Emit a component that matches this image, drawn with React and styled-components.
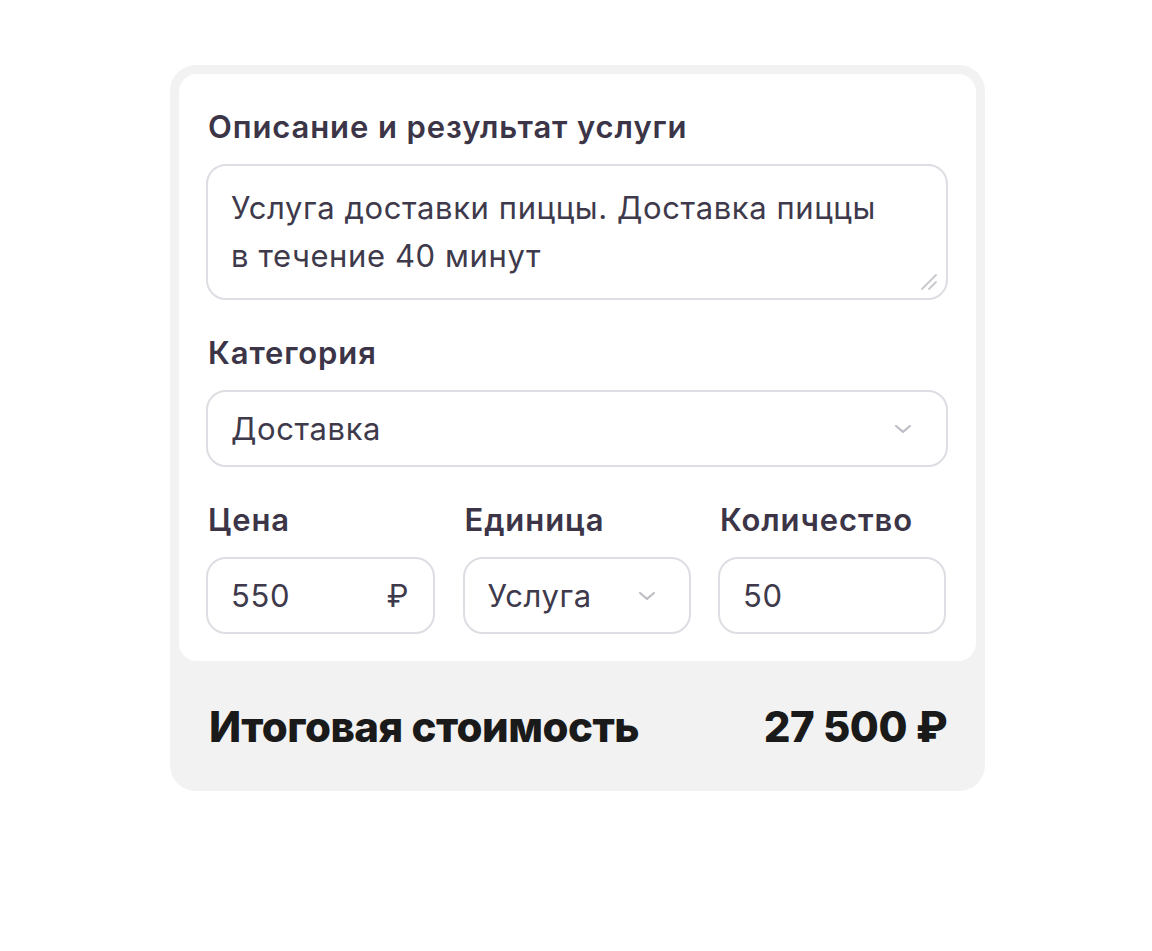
import React from "react";
import styled, { createGlobalStyle } from "styled-components";

const Global = createGlobalStyle`
  html, body { margin: 0; padding: 0; background: #ffffff; }
  body { font-family: Inter, "Noto Sans", sans-serif; -webkit-font-smoothing: antialiased; }
  * { box-sizing: border-box; }
`;

const Page = styled.div`
  width: 1152px;
  height: 951px;
  padding: 65px 0 0 170px;
`;

const Outer = styled.div`
  width: 815px;
  background: #f2f2f2;
  border-radius: 26px;
  padding: 9px 9px 0 9px;
`;

const Inner = styled.div`
  background: #ffffff;
  border-radius: 18px;
  padding: 35px 28px 27px 27px;
  display: flex;
  flex-direction: column;
  gap: 35px;
`;

const Field = styled.div`
  display: flex;
  flex-direction: column;
  gap: 19px;
  min-width: 0;
`;

const Label = styled.div`
  font-size: 31px;
  line-height: 36px;
  font-weight: 600;
  color: #3b3547;
  padding-left: 2px;
  letter-spacing: 0.9px;
  white-space: nowrap;
`;

const Box = styled.div`
  position: relative;
  border: 2px solid #dedde3;
  border-radius: 20px;
  background: #ffffff;
  height: ${(p) => p.$h || 77}px;
  padding: ${(p) => p.$pad || "0 24px 0 23px"};
  display: flex;
  align-items: ${(p) => (p.$top ? "flex-start" : "center")};
  justify-content: space-between;
  font-size: 31px;
  line-height: 48px;
  font-weight: 400;
  letter-spacing: 0.6px;
  color: #3e3a4b;
`;

const Value = styled.span`
  white-space: pre-line;
`;

const Suffix = styled.span`
  color: #3e3a4b;
`;

const Handle = styled.svg`
  position: absolute;
  right: 8px;
  bottom: 7px;
`;

const Row = styled.div`
  display: grid;
  grid-template-columns: 229px 228px 228px;
  column-gap: 27.5px;
`;

const Footer = styled.div`
  height: 130px;
  display: flex;
  align-items: center;
  justify-content: space-between;
  padding: 0 29px 0 30px;
  font-size: 42px;
  font-weight: 800;
  color: #1a1a1a;
  letter-spacing: -0.5px;
  white-space: nowrap;
`;

const Chevron = ({ size = 18 }) => (
  <svg width={size} height={size * 0.55} viewBox="0 0 18 10" fill="none">
    <path d="M2 2l7 6 7-6" stroke="#bfbec6" strokeWidth="2.2" strokeLinecap="round" strokeLinejoin="round" />
  </svg>
);

export default function App() {
  return (
    <>
      <Global />
      <Page>
        <Outer>
          <Inner>
            <Field>
              <Label>Описание и результат услуги</Label>
              <Box $h={136} $top $pad="18px 24px 0 23px">
                <Value>{"Услуга доставки пиццы. Доставка пиццы\nв течение 40 минут"}</Value>
                <Handle width="18" height="18" viewBox="0 0 18 18">
                  <path d="M2 16L16 2M9 16l7-7" stroke="#c9c8cf" strokeWidth="1.8" strokeLinecap="round" />
                </Handle>
              </Box>
            </Field>
            <Field>
              <Label>Категория</Label>
              <Box $pad="0 34px 0 23px">
                <Value>Доставка</Value>
                <Chevron />
              </Box>
            </Field>
            <Row>
              <Field>
                <Label>Цена</Label>
                <Box>
                  <Value>550</Value>
                  <Suffix>₽</Suffix>
                </Box>
              </Field>
              <Field>
                <Label>Единица</Label>
                <Box $pad="0 33px 0 23px">
                  <Value>Услуга</Value>
                  <Chevron />
                </Box>
              </Field>
              <Field>
                <Label>Количество</Label>
                <Box>
                  <Value>50</Value>
                </Box>
              </Field>
            </Row>
          </Inner>
          <Footer>
            <span>Итоговая стоимость</span>
            <span>27 500 ₽</span>
          </Footer>
        </Outer>
      </Page>
    </>
  );
}
